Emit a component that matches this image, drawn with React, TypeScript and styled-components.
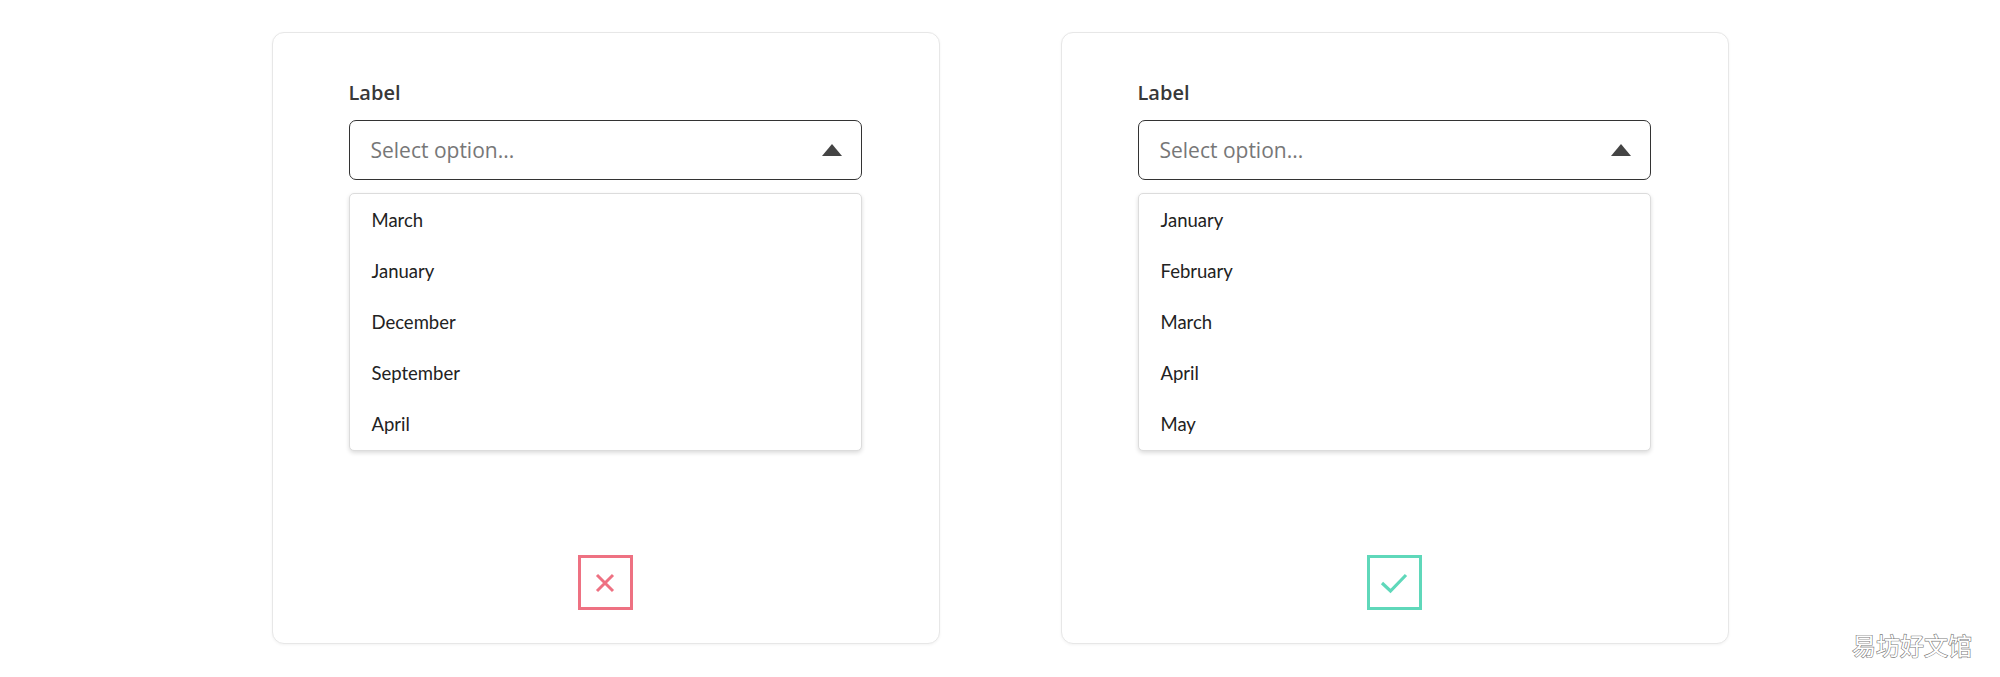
import React from "react";
import styled, { createGlobalStyle } from "styled-components";

const GlobalStyle = createGlobalStyle`
  html, body {
    margin: 0;
    padding: 0;
    background: #ffffff;
  }
  body {
    font-family: "Open Sans", "Noto Sans", sans-serif;
  }
  * { box-sizing: border-box; }
`;

const Page = styled.div`
  position: relative;
  width: 2000px;
  height: 677px;
  display: flex;
  justify-content: center;
  align-items: flex-start;
  gap: 121px;
  padding-top: 32px;
  background: #ffffff;
`;

const Card = styled.div`
  width: 668px;
  height: 612px;
  border: 1px solid #e7e7e7;
  border-radius: 12px;
  box-shadow: 0 1px 3px rgba(0, 0, 0, 0.05);
  display: flex;
  flex-direction: column;
  padding: 46px 77px 33px 76px;
  background: #fff;
`;

const FieldLabel = styled.div`
  font-family: "Open Sans", "Noto Sans", sans-serif;
  font-size: 20px;
  font-weight: 600;
  line-height: 28px;
  color: #383838;
  margin-bottom: 13px;
`;

const SelectBox = styled.div`
  height: 60px;
  border: 1.5px solid #333333;
  border-radius: 7px;
  display: flex;
  align-items: center;
  justify-content: space-between;
  padding: 0 19px 0 21px;
`;

const Placeholder = styled.span`
  font-family: "Open Sans", "Noto Sans", sans-serif;
  font-size: 21px;
  color: #777777;
  line-height: 1;
`;

const Caret = styled.svg`
  width: 20px;
  height: 12px;
  display: block;
`;

const Menu = styled.ul`
  list-style: none;
  margin: 13px 0 0;
  padding: 0;
  border: 1px solid #dcdcdc;
  border-radius: 5px;
  box-shadow: 0 2px 4px rgba(0, 0, 0, 0.14);
  background: #fff;
`;

const MenuItem = styled.li`
  height: 51.2px;
  display: flex;
  align-items: center;
  padding-left: 22px;
  font-family: "Lato", "Nunito", sans-serif;
  font-size: 18.5px;
  color: #222222;
`;

const Verdict = styled.div<{ $color: string }>`
  margin: auto auto 0;
  width: 55px;
  height: 55px;
  border: 3px solid ${(p) => p.$color};
  display: flex;
  align-items: center;
  justify-content: center;
`;

const Watermark = styled.div`
  position: absolute;
  right: 28px;
  bottom: 19px;
  font-family: "Noto Sans CJK SC", sans-serif;
  font-size: 24px;
  line-height: 26px;
  color: #ffffff;
  -webkit-text-stroke: 1.2px #7a7a7a;
  paint-order: stroke fill;
`;

const months = {
  bad: ["March", "January", "December", "September", "April"],
  good: ["January", "February", "March", "April", "May"],
};

const CrossIcon = () => (
  <svg width="22" height="22" viewBox="0 0 22 22">
    <path d="M3 3 L19 19 M19 3 L3 19" stroke="#ee7182" strokeWidth="3" fill="none" />
  </svg>
);

const CheckIcon = () => (
  <svg width="28" height="22" viewBox="0 0 28 22">
    <path d="M2 11 L10.5 19 L26 3" stroke="#5fd8ba" strokeWidth="3.2" fill="none" />
  </svg>
);

const Example = ({ items, good }: { items: string[]; good: boolean }) => (
  <Card>
    <FieldLabel>Label</FieldLabel>
    <SelectBox>
      <Placeholder>Select option...</Placeholder>
      <Caret viewBox="0 0 20 12">
        <polygon points="10,0 20,12 0,12" fill="#444444" />
      </Caret>
    </SelectBox>
    <Menu>
      {items.map((m) => (
        <MenuItem key={m}>{m}</MenuItem>
      ))}
    </Menu>
    <Verdict $color={good ? "#5fd8ba" : "#ee7182"}>
      {good ? <CheckIcon /> : <CrossIcon />}
    </Verdict>
  </Card>
);

export default function App() {
  return (
    <>
      <GlobalStyle />
      <Page>
        <Example items={months.bad} good={false} />
        <Example items={months.good} good={true} />
        <Watermark>易坊好文馆</Watermark>
      </Page>
    </>
  );
}
